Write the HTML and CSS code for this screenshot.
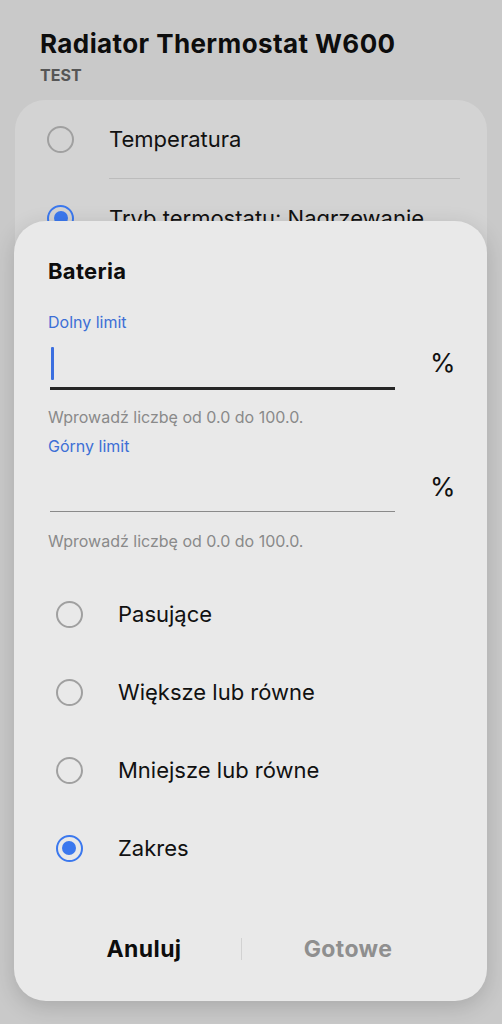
FILE: index.html
```html
<!DOCTYPE html>
<html lang="pl">
<head>
<meta charset="utf-8">
<title>Radiator Thermostat W600</title>
<link rel="stylesheet" href="styles.css">
</head>
<body>
<div class="screen">
  <header class="header">
    <h1 class="title">Radiator Thermostat W600</h1>
    <div class="subtitle">TEST</div>
  </header>
  <section class="card">
    <div class="card-row">
      <span class="radio"></span>
      <span class="card-text">Temperatura</span>
    </div>
    <div class="card-divider"></div>
    <div class="card-row">
      <span class="radio checked"></span>
      <span class="card-text">Tryb termostatu: Nagrzewanie</span>
    </div>
  </section>

  <div class="dialog">
    <h2 class="dialog-title">Bateria</h2>

    <div class="label">Dolny limit</div>
    <div class="field-row">
      <div class="field active"><span class="cursor"></span></div>
      <span class="unit">%</span>
    </div>
    <div class="helper">Wprowadź liczbę od 0.0 do 100.0.</div>

    <div class="label label-second">Górny limit</div>
    <div class="field-row">
      <div class="field"></div>
      <span class="unit">%</span>
    </div>
    <div class="helper helper-second">Wprowadź liczbę od 0.0 do 100.0.</div>

    <div class="options">
      <div class="option"><span class="radio"></span><span class="option-text">Pasujące</span></div>
      <div class="option"><span class="radio"></span><span class="option-text">Większe lub równe</span></div>
      <div class="option"><span class="radio"></span><span class="option-text">Mniejsze lub równe</span></div>
      <div class="option"><span class="radio checked"></span><span class="option-text">Zakres</span></div>
    </div>

    <div class="actions">
      <button class="btn btn-cancel">Anuluj</button>
      <span class="btn-divider"></span>
      <button class="btn btn-done">Gotowe</button>
    </div>
  </div>
</div>
</body>
</html>
```
FILE: styles.css
```css
* { box-sizing: border-box; }

html, body {
  margin: 0;
  padding: 0;
  background: #c9c9c9;
  font-family: Inter, "Noto Sans", "Liberation Sans", sans-serif;
  color: #111;
}

.screen {
  position: relative;
  width: 502px;
  height: 1024px;
  overflow: hidden;
}

.header {
  padding: 28px 40px 0;
}

.title {
  margin: 0;
  font-size: 26px;
  line-height: 32px;
  font-weight: 700;
  color: #0d0d0d;
  letter-spacing: 0.4px;
}

.subtitle {
  margin-top: 5px;
  font-size: 16px;
  line-height: 20px;
  font-weight: 700;
  color: #565656;
}

.card {
  margin: 15px 15px 0 15px;
  height: 420px;
  background: #d3d3d3;
  border-radius: 30px;
}

.card-row {
  display: flex;
  align-items: center;
  height: 78px;
}

.card-row .radio {
  margin-left: 32px;
}

.card-text {
  margin-left: 35px;
  font-size: 22px;
  color: #111;
  white-space: nowrap;
}

.card-divider {
  height: 1px;
  background: #bcbcbc;
  margin-left: 94px;
  margin-right: 27px;
}

.radio {
  flex: none;
  display: inline-block;
  width: 27px;
  height: 27px;
  border-radius: 50%;
  border: 2px solid #a0a0a0;
  position: relative;
}

.radio.checked {
  border: 2.5px solid #3b78ee;
}

.radio.checked::after {
  content: "";
  position: absolute;
  left: 50%;
  top: 50%;
  width: 14px;
  height: 14px;
  margin: -7px 0 0 -7px;
  border-radius: 50%;
  background: #3b78ee;
}

.dialog {
  position: absolute;
  left: 14px;
  top: 221px;
  width: 473px;
  height: 780px;
  background: #e9e9e9;
  border-radius: 32px;
  box-shadow: 0 6px 22px rgba(0, 0, 0, 0.16);
  padding: 36px 0 0 34px;
}

.dialog-title {
  margin: 0;
  font-size: 22px;
  line-height: 28px;
  font-weight: 700;
  color: #0d0d0d;
  letter-spacing: 0.3px;
}

.label {
  margin-top: 27px;
  font-size: 16px;
  line-height: 20px;
  color: #3d6fd6;
}

.label-second {
  margin-top: 9px;
}

.field-row {
  display: flex;
  align-items: flex-start;
}

.field {
  margin-left: 2px;
  width: 345px;
  height: 56px;
  border-bottom: 1px solid #8a8a8a;
  margin-bottom: 2px;
  padding-top: 15px;
}

.field.active {
  height: 58px;
  border-bottom: 3px solid #262626;
  margin-bottom: 0;
}

.cursor {
  display: block;
  width: 3px;
  height: 33px;
  margin-left: 1px;
  background: #3b6fe0;
  border-radius: 1px;
}

.unit {
  margin-left: 35px;
  margin-top: 7px;
  font-size: 26px;
  line-height: 48px;
  color: #111;
}

.helper {
  margin-top: 17px;
  font-size: 16px;
  line-height: 20px;
  color: #8a8a8a;
}

.options {
  margin-top: 24px;
}

.option {
  display: flex;
  align-items: center;
  height: 78px;
}

.option .radio {
  margin-left: 7.5px;
}

.option-text {
  margin-left: 35.5px;
  font-size: 22px;
  color: #111;
}

.actions {
  margin-top: 34px;
  margin-left: -1px;
  display: flex;
  align-items: center;
  height: 56px;
}

.btn {
  border: 0;
  background: none;
  padding: 0;
  font-family: inherit;
  font-size: 23px;
  font-weight: 700;
  letter-spacing: 0.4px;
  line-height: 56px;
  text-align: center;
}

.btn-cancel {
  width: 194px;
  color: #0d0d0d;
}

.btn-divider {
  width: 1px;
  height: 22px;
  background: #d2d2d2;
}

.btn-done {
  width: 212px;
  color: #8f8f8f;
}
```
